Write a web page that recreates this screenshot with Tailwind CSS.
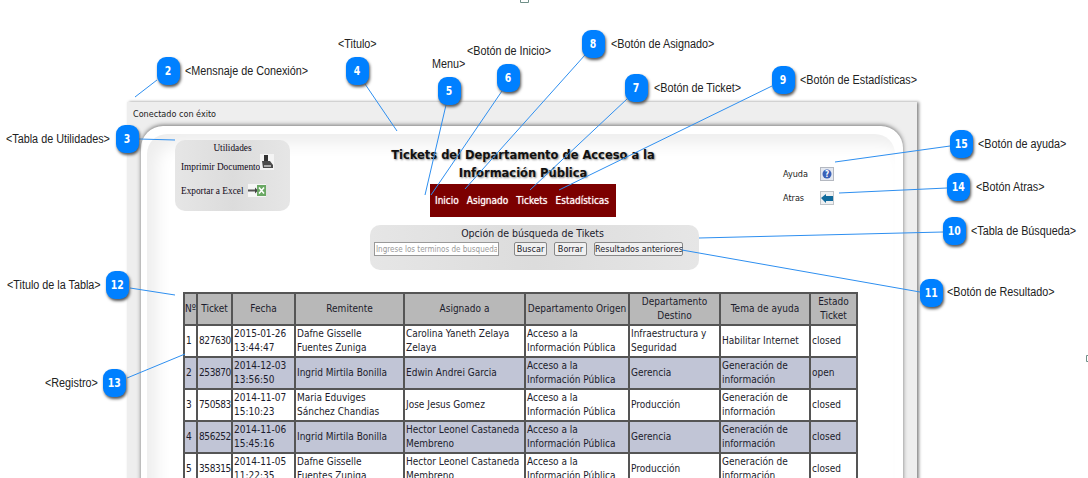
<!DOCTYPE html>
<html lang="es">
<head>
  <meta charset="UTF-8" />
  <title>Tickets</title>
  <script src="https://cdn.jsdelivr.net/npm/@tailwindcss/browser@4"></script>
</head>
<body class="bg-white">
<div class="relative w-[1088px] h-[478px] overflow-hidden bg-white font-['DejaVu_Sans_Condensed','DejaVu_Sans',sans-serif] text-[10px] text-[#1c1c2c]">

  <!-- page -->
  <div class="ml-[127px] mt-[102px] w-[790px] h-[400px] bg-[#eeeeee] shadow-[2px_0_3px_#888]">
    <p class="pl-[6px] pt-[6px] h-[24px] text-[9px] leading-[13px] text-[#222]">Conectado con éxito</p>
    <div class="ml-[14px] w-[762px] h-[376px] bg-white rounded-t-[22px] pt-[8px] px-[6px] shadow-[0_-1px_4px_#777]">
      <div class="w-[748px] h-[368px] rounded-t-[20px] bg-white shadow-[inset_10px_10px_16px_#eeeeee]">

        <div class="flex h-[91px]">
          <div class="ml-[28px] mt-[6px] pt-[1px] w-[115px] h-[71px] rounded-[10px] bg-gradient-to-r from-[#e6e6e6] via-[#dcdcdc] to-[#e6e6e6] font-['Liberation_Serif',serif] text-[9.3px] text-[#100818]">
            <p class="text-center leading-[14px]">Utilidades</p>
            <div class="flex items-center pl-[6px] h-[25px]">
              <span class="w-[79px] whitespace-nowrap">Imprimir Documento</span>
              <svg class="self-start -mt-[1px]" width="14" height="16" viewBox="0 0 14 16"><rect width="14" height="16" fill="#f4f4f4"/><path d="M4 1h4v6H4z" fill="#333"/><path d="M2 7h8l3 4v3H3z" fill="#4a4a4a"/><path d="M4 11h7v2H4z" fill="#aaa"/></svg>
            </div>
            <div class="flex items-center pl-[6px] h-[24px]">
              <span class="w-[67px] whitespace-nowrap">Exportar a Excel</span>
              <svg class="-mt-[3px]" width="18" height="13" viewBox="0 0 18 13"><rect width="18" height="13" fill="#f6f6f6"/><path d="M0 6.500h8" stroke="#555" stroke-width="2"/><path d="M7 3.500l3 3-3 3z" fill="#444"/><rect x="9" y="1" width="9" height="11" fill="#6aa864"/><path d="M11 3.500l5 6M16 3.500l-5 6" stroke="#fff" stroke-width="1.500"/></svg>
            </div>
          </div>

          <div class="w-[466px] flex flex-col items-center pt-[12px]">
            <h1 class="w-[280px] text-center font-bold text-[12.750px] leading-[18px] text-[#111] [text-shadow:1px_1px_2px_#888]">Tickets del Departamento de Acceso a la Información Pública</h1>
            <nav class="mt-[2px] w-[186px] h-[33px] bg-[#7c0000] flex items-center gap-[8px] pl-[5px] text-[10px] text-white [text-shadow:0_0_1px_#fcc]">
              <a>Inicio</a><a>Asignado</a><a>Tickets</a><a>Estadísticas</a>
            </nav>
          </div>

          <div class="ml-[27px] mt-[33px] text-[9px] text-[#222]">
            <div class="flex items-center h-[14px] w-[51px] justify-between">
              <span class="pt-[1px]">Ayuda</span>
              <svg width="14" height="14" viewBox="0 0 14 14"><rect x=".5" y=".5" width="13" height="13" fill="#e4e8f0" stroke="#b4b8c0"/><circle cx="7" cy="7" r="4.500" fill="#3a62b8"/><text x="7" y="10" text-anchor="middle" font-size="8" font-weight="bold" fill="#fff">?</text></svg>
            </div>
            <div class="flex items-center h-[14px] w-[51px] justify-between mt-[10px]">
              <span class="pt-[1px]">Atras</span>
              <svg width="14" height="14" viewBox="0 0 14 14"><rect x=".5" y=".5" width="13" height="13" fill="#eef0f2" stroke="#c0c4c8"/><path d="M1 7l5-4v2h7v5H6v2z" fill="#0f6a9c"/></svg>
            </div>
          </div>
        </div>

        <div class="ml-[223px] w-[329px] h-[45px] rounded-[10px] bg-gradient-to-r from-[#e6e6e6] via-[#dcdcdc] to-[#e6e6e6]">
          <p class="text-center text-[10.500px] leading-[14px] pt-[1px] pr-[4px] h-[17px]">Opción de búsqueda de Tikets</p>
          <div class="flex items-center pl-[4px] text-[9px]">
            <input class="w-[125px] h-[14px] bg-white border border-[#999] px-[1px] text-[8px] placeholder:text-[#999]" placeholder="Ingrese los terminos de busqueda" />
            <button class="ml-[15px] w-[33px] h-[14px] bg-[#f0f0f0] border border-[#888] rounded-[2px] leading-[12px]">Buscar</button>
            <button class="ml-[7px] w-[33px] h-[14px] bg-[#f0f0f0] border border-[#888] rounded-[2px] leading-[12px]">Borrar</button>
            <button class="ml-[7px] w-[89px] h-[14px] bg-[#f0f0f0] border border-[#888] rounded-[2px] leading-[12px] whitespace-nowrap">Resultados anteriores</button>
          </div>
        </div>

        <table class="ml-[36px] mt-[22px] w-[673px] table-fixed border-collapse leading-[14px] [&_td]:border-2 [&_td]:border-[#555] [&_td]:px-[1px] [&_th]:border-2 [&_th]:border-[#555] [&_th]:font-normal [&_th]:px-0">
          <colgroup>
            <col class="w-[13px]" /><col class="w-[35px]" /><col class="w-[63px]" /><col class="w-[109px]" /><col class="w-[121px]" /><col class="w-[104px]" /><col class="w-[91px]" /><col class="w-[90px]" /><col class="w-[47px]" />
          </colgroup>
          <tr class="h-[32px] bg-[#b8b8b8] text-center">
            <th>Nº</th><th>Ticket</th><th>Fecha</th><th>Remitente</th><th>Asignado a</th><th class="whitespace-nowrap">Departamento Origen</th><th>Departamento Destino</th><th>Tema de ayuda</th><th>Estado Ticket</th>
          </tr>
          <tr class="h-[32px] bg-white">
            <td>1</td><td class="tracking-[-0.4px]">827630</td><td>2015-01-26 13:44:47</td><td>Dafne Gisselle<br />Fuentes Zuniga</td><td>Carolina Yaneth Zelaya Zelaya</td><td>Acceso a la Información Pública</td><td>Infraestructura y Seguridad</td><td>Habilitar Internet</td><td>closed</td>
          </tr>
          <tr class="h-[32px] bg-[#c1c5d6]">
            <td>2</td><td class="tracking-[-0.4px]">253870</td><td>2014-12-03 13:56:50</td><td>Ingrid Mirtila Bonilla</td><td>Edwin Andrei Garcia</td><td>Acceso a la Información Pública</td><td>Gerencia</td><td>Generación de información</td><td>open</td>
          </tr>
          <tr class="h-[32px] bg-white">
            <td>3</td><td class="tracking-[-0.4px]">750583</td><td>2014-11-07 15:10:23</td><td>Maria Eduviges Sánchez Chandias</td><td>Jose Jesus Gomez</td><td>Acceso a la Información Pública</td><td>Producción</td><td>Generación de información</td><td>closed</td>
          </tr>
          <tr class="h-[32px] bg-[#c1c5d6]">
            <td>4</td><td class="tracking-[-0.4px]">856252</td><td>2014-11-06 15:45:16</td><td>Ingrid Mirtila Bonilla</td><td class="whitespace-nowrap">Hector Leonel Castaneda<br />Membreno</td><td>Acceso a la Información Pública</td><td>Gerencia</td><td>Generación de información</td><td>closed</td>
          </tr>
          <tr class="h-[32px] bg-white">
            <td>5</td><td class="tracking-[-0.4px]">358315</td><td>2014-11-05 11:22:35</td><td>Dafne Gisselle<br />Fuentes Zuniga</td><td class="whitespace-nowrap">Hector Leonel Castaneda<br />Membreno</td><td>Acceso a la Información Pública</td><td>Producción</td><td>Generación de información</td><td>closed</td>
          </tr>
        </table>
      </div>
    </div>
  </div>

  <!-- callout lines -->
  <svg class="absolute left-0 top-0 pointer-events-none" width="1088" height="478" fill="none" stroke="#2e8ff0" stroke-width="1">
    <path d="M157 80L135 97" />
    <path d="M139 139L175 140" />
    <path d="M365 84L397 131" />
    <path d="M446 105L425 195" />
    <path d="M502 91L431 195" />
    <path d="M585 55L465 189" />
    <path d="M627 99L530 190" />
    <path d="M772 86L559 190" />
    <path d="M950 146L835 162" />
    <path d="M947 188L839 193" />
    <path d="M943 232L699 238" />
    <path d="M920 292L682 250" />
    <path d="M130 288L175 295" />
    <path d="M127 378L185 354" />
    <path d="M520.500 0V2.500H528.500V0" stroke="#6f8f88" />
    <path d="M1088 355.500H1086.500V361.500H1088" stroke="#6f8f88" />
  </svg>

  <!-- callout badges -->
  <div class="absolute left-[157px] top-[57px] w-[23px] h-[28px] rounded-[9px] bg-[#0080ff] shadow-[1px_2px_3px_#555] flex items-center justify-center text-white font-bold text-[13px]"><span class="scale-x-[.8]">2</span></div>
  <div class="absolute left-[116px] top-[125px] w-[23px] h-[28px] rounded-[9px] bg-[#0080ff] shadow-[1px_2px_3px_#555] flex items-center justify-center text-white font-bold text-[13px]"><span class="scale-x-[.8]">3</span></div>
  <div class="absolute left-[346px] top-[57px] w-[23px] h-[28px] rounded-[9px] bg-[#0080ff] shadow-[1px_2px_3px_#555] flex items-center justify-center text-white font-bold text-[13px]"><span class="scale-x-[.8]">4</span></div>
  <div class="absolute left-[438px] top-[77px] w-[23px] h-[28px] rounded-[9px] bg-[#0080ff] shadow-[1px_2px_3px_#555] flex items-center justify-center text-white font-bold text-[13px]"><span class="scale-x-[.8]">5</span></div>
  <div class="absolute left-[497px] top-[64px] w-[23px] h-[28px] rounded-[9px] bg-[#0080ff] shadow-[1px_2px_3px_#555] flex items-center justify-center text-white font-bold text-[13px]"><span class="scale-x-[.8]">6</span></div>
  <div class="absolute left-[625px] top-[74px] w-[23px] h-[28px] rounded-[9px] bg-[#0080ff] shadow-[1px_2px_3px_#555] flex items-center justify-center text-white font-bold text-[13px]"><span class="scale-x-[.8]">7</span></div>
  <div class="absolute left-[582px] top-[30px] w-[23px] h-[28px] rounded-[9px] bg-[#0080ff] shadow-[1px_2px_3px_#555] flex items-center justify-center text-white font-bold text-[13px]"><span class="scale-x-[.8]">8</span></div>
  <div class="absolute left-[772px] top-[66px] w-[23px] h-[28px] rounded-[9px] bg-[#0080ff] shadow-[1px_2px_3px_#555] flex items-center justify-center text-white font-bold text-[13px]"><span class="scale-x-[.8]">9</span></div>
  <div class="absolute left-[943px] top-[217px] w-[23px] h-[28px] rounded-[9px] bg-[#0080ff] shadow-[1px_2px_3px_#555] flex items-center justify-center text-white font-bold text-[13px]"><span class="scale-x-[.8]">10</span></div>
  <div class="absolute left-[920px] top-[279px] w-[23px] h-[28px] rounded-[9px] bg-[#0080ff] shadow-[1px_2px_3px_#555] flex items-center justify-center text-white font-bold text-[13px]"><span class="scale-x-[.8]">11</span></div>
  <div class="absolute left-[106px] top-[271px] w-[23px] h-[28px] rounded-[9px] bg-[#0080ff] shadow-[1px_2px_3px_#555] flex items-center justify-center text-white font-bold text-[13px]"><span class="scale-x-[.8]">12</span></div>
  <div class="absolute left-[103px] top-[369px] w-[23px] h-[28px] rounded-[9px] bg-[#0080ff] shadow-[1px_2px_3px_#555] flex items-center justify-center text-white font-bold text-[13px]"><span class="scale-x-[.8]">13</span></div>
  <div class="absolute left-[947px] top-[173px] w-[23px] h-[28px] rounded-[9px] bg-[#0080ff] shadow-[1px_2px_3px_#555] flex items-center justify-center text-white font-bold text-[13px]"><span class="scale-x-[.8]">14</span></div>
  <div class="absolute left-[950px] top-[130px] w-[23px] h-[28px] rounded-[9px] bg-[#0080ff] shadow-[1px_2px_3px_#555] flex items-center justify-center text-white font-bold text-[13px]"><span class="scale-x-[.8]">15</span></div>

  <!-- callout labels -->
  <span class="absolute left-[185px] top-[64px] origin-left scale-x-[.9] font-['Liberation_Sans',sans-serif] text-[12px] leading-[14px] text-[#222] whitespace-nowrap">&lt;Mensnaje de Conexión&gt;</span>
  <span class="absolute left-[6px] top-[132px] origin-left scale-x-[.9] font-['Liberation_Sans',sans-serif] text-[12px] leading-[14px] text-[#222] whitespace-nowrap">&lt;Tabla de Utilidades&gt;</span>
  <span class="absolute left-[338px] top-[37px] origin-left scale-x-[.9] font-['Liberation_Sans',sans-serif] text-[12px] leading-[14px] text-[#222] whitespace-nowrap">&lt;Titulo&gt;</span>
  <span class="absolute left-[432px] top-[57px] origin-left scale-x-[.9] font-['Liberation_Sans',sans-serif] text-[12px] leading-[14px] text-[#222] whitespace-nowrap">Menu&gt;</span>
  <span class="absolute left-[467px] top-[44px] origin-left scale-x-[.9] font-['Liberation_Sans',sans-serif] text-[12px] leading-[14px] text-[#222] whitespace-nowrap">&lt;Botón de Inicio&gt;</span>
  <span class="absolute left-[611px] top-[37px] origin-left scale-x-[.9] font-['Liberation_Sans',sans-serif] text-[12px] leading-[14px] text-[#222] whitespace-nowrap">&lt;Botón de Asignado&gt;</span>
  <span class="absolute left-[654px] top-[81px] origin-left scale-x-[.9] font-['Liberation_Sans',sans-serif] text-[12px] leading-[14px] text-[#222] whitespace-nowrap">&lt;Botón de Ticket&gt;</span>
  <span class="absolute left-[800px] top-[73px] origin-left scale-x-[.9] font-['Liberation_Sans',sans-serif] text-[12px] leading-[14px] text-[#222] whitespace-nowrap">&lt;Botón de Estadísticas&gt;</span>
  <span class="absolute left-[978px] top-[137px] origin-left scale-x-[.9] font-['Liberation_Sans',sans-serif] text-[12px] leading-[14px] text-[#222] whitespace-nowrap">&lt;Botón de ayuda&gt;</span>
  <span class="absolute left-[976px] top-[180px] origin-left scale-x-[.9] font-['Liberation_Sans',sans-serif] text-[12px] leading-[14px] text-[#222] whitespace-nowrap">&lt;Botón Atras&gt;</span>
  <span class="absolute left-[971px] top-[224px] origin-left scale-x-[.9] font-['Liberation_Sans',sans-serif] text-[12px] leading-[14px] text-[#222] whitespace-nowrap">&lt;Tabla de Búsqueda&gt;</span>
  <span class="absolute left-[947px] top-[285px] origin-left scale-x-[.9] font-['Liberation_Sans',sans-serif] text-[12px] leading-[14px] text-[#222] whitespace-nowrap">&lt;Botón de Resultado&gt;</span>
  <span class="absolute left-[7px] top-[278px] origin-left scale-x-[.9] font-['Liberation_Sans',sans-serif] text-[12px] leading-[14px] text-[#222] whitespace-nowrap">&lt;Titulo de la Tabla&gt;</span>
  <span class="absolute left-[45px] top-[376px] origin-left scale-x-[.9] font-['Liberation_Sans',sans-serif] text-[12px] leading-[14px] text-[#222] whitespace-nowrap">&lt;Registro&gt;</span>
</div>
</body>
</html>
